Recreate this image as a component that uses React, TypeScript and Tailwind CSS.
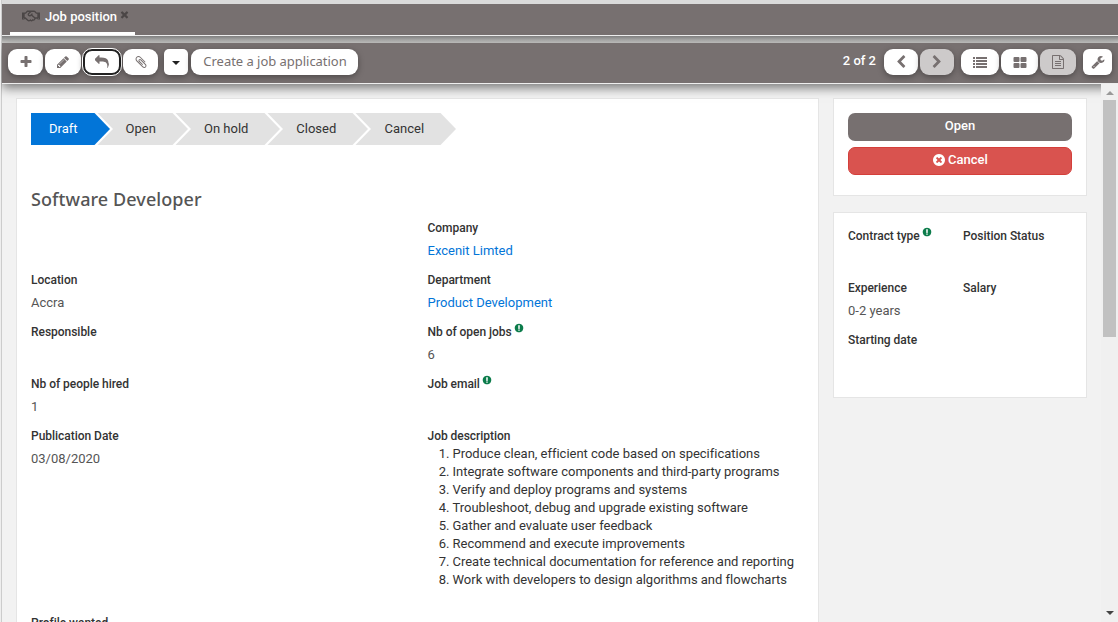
import type { ReactNode } from "react";
import { FaRegHandshake } from "react-icons/fa";

const PATHS = {
  plus: "M1600 736v192q0 40-28 68t-68 28h-416v416q0 40-28 68t-68 28h-192q-40 0-68-28t-28-68v-416h-416q-40 0-68-28t-28-68v-192q0-40 28-68t68-28h416v-416q0-40 28-68t68-28h192q40 0 68 28t28 68v416h416q40 0 68 28t28 68z",
  pencil: "M491 1536l91-91-235-235-91 91v107h128v128h107zm523-928q0-22-22-22-10 0-17 7l-542 542q-7 7-7 17 0 22 22 22 10 0 17-7l542-542q7-7 7-17zm-54-192l416 416-832 832h-416v-416zm683 96q0 53-37 90l-166 166-416-416 166-165q36-38 90-38 53 0 91 38l235 234q37 39 37 91z",
  reply: "M1792 1120q0 166-127 451-3 7-10.5 24t-13.5 30-13 22q-12 17-28 17-15 0-23.5-10t-8.5-25q0-9 2.5-26.5t2.5-23.5q5-68 5-123 0-112-19.5-200.5t-54-153.5-89-112-115-80.5-144.5-47-164.5-24.5-190.5-7h-224v256q0 26-19 45t-45 19-45-19l-512-512q-19-19-19-45t19-45l512-512q19-19 45-19t45 19 19 45v256h224q713 0 875 403 53 134 53 333z",
  clip: "M1596 1385q0 117-79 196t-196 79q-135 0-235-100l-777-776q-113-115-113-271 0-159 110-270t269-111q158 0 273 113l605 606q10 10 10 22 0 16-30.5 46.5t-46.5 30.5q-13 0-23-10l-606-607q-79-77-181-77-106 0-179 75t-73 181q0 105 76 181l776 777q63 63 145 63 64 0 106-42t42-106q0-82-63-145l-581-581q-26-24-60-24-29 0-48 19t-19 48q0 32 25 59l410 410q10 10 10 22 0 16-31 47t-47 31q-12 0-22-10l-410-410q-63-61-63-149 0-82 57-139t139-57q88 0 149 63l581 581q100 98 100 235z",
  left: "M1427 301l-531 531 531 531q19 19 19 45t-19 45l-166 166q-19 19-45 19t-45-19l-742-742q-19-19-19-45t19-45l742-742q19-19 45-19t45 19l166 166q19 19 19 45t-19 45z",
  right: "M1363 877l-742 742q-19 19-45 19t-45-19l-166-166q-19-19-19-45t19-45l531-531-531-531q-19-19-19-45t19-45l166-166q19-19 45-19t45 19l742 742q19 19 19 45t-19 45z",
  list: "M0 256h256v256H0zM384 256h1408v256H384zM0 640h256v256H0zM384 640h1408v256H384zM0 1024h256v256H0zM384 1024h1408v256H384zM0 1408h256v256H0zM384 1408h1408v256H384z",
  grid: "M192 256h512q128 0 128 128v384q0 128-128 128h-512q-128 0-128-128v-384q0-128 128-128zM1088 256h512q128 0 128 128v384q0 128-128 128h-512q-128 0-128-128v-384q0-128 128-128zM192 1024h512q128 0 128 128v384q0 128-128 128h-512q-128 0-128-128v-384q0-128 128-128zM1088 1024h512q128 0 128 128v384q0 128-128 128h-512q-128 0-128-128v-384q0-128 128-128z",
  file: "M1596 380q28 28 48 76t20 88v1152q0 40-28 68t-68 28h-1344q-40 0-68-28t-28-68v-1600q0-40 28-68t68-28h896q40 0 88 20t76 48zm-444-244v376h376q-10-29-22-41l-313-313q-12-12-41-22zm384 1528v-1024h-416q-40 0-68-28t-28-68v-416h-768v1536h1280zm-1024-864q0-14 9-23t23-9h704q14 0 23 9t9 23v64q0 14-9 23t-23 9h-704q-14 0-23-9t-9-23v-64zm736 224q14 0 23 9t9 23v64q0 14-9 23t-23 9h-704q-14 0-23-9t-9-23v-64q0-14 9-23t23-9h704zm0 256q14 0 23 9t9 23v64q0 14-9 23t-23 9h-704q-14 0-23-9t-9-23v-64q0-14 9-23t23-9h704z",
  wrench: "M448 1472q0-26-19-45t-45-19-45 19-19 45 19 45 45 19 45-19 19-45zm644-420l-682 682q-37 37-90 37-52 0-91-37l-106-108q-38-36-38-90 0-53 38-91l681-681q39 98 114.5 173.5t173.5 114.5zm634-435q0 39-23 106-47 134-164.5 217.5t-258.5 83.5q-185 0-316.5-131.5t-131.5-316.5 131.5-316.5 316.5-131.5q58 0 121.5 16.5t107.5 46.5q16 11 16 28t-16 28l-293 169v224l193 107q5-3 79-48.5t135.5-81 70.5-35.5q15 0 23.5 10t8.5 25z",
  times: "M1490 1322q0 40-28 68l-136 136q-28 28-68 28t-68-28l-294-294-294 294q-28 28-68 28t-68-28l-136-136q-28-28-28-68t28-68l294-294-294-294q-28-28-28-68t28-68l136-136q28-28 68-28t68 28l294 294 294-294q28-28 68-28t68 28l136 136q28 28 28 68t-28 68l-294 294 294 294q28 28 28 68z",
  timesCircle: "M1277 1122q0-26-19-45l-181-181 181-181q19-19 19-45 0-27-19-46l-90-90q-19-19-46-19-26 0-45 19l-181 181-181-181q-19-19-45-19-27 0-46 19l-90 90q-19 19-19 46 0 26 19 45l181 181-181 181q-19 19-19 45 0 27 19 46l90 90q19 19 46 19 26 0 45-19l181-181 181 181q19 19 45 19 27 0 46-19l90-90q19-19 19-46zm387-226q0 209-103 385.5t-279.5 279.5-385.5 103-385.5-103-279.5-279.5-103-385.5 103-385.5 279.5-279.5 385.5-103 385.5 103 279.5 279.5 103 385.5z",
  info: "M896 128q209 0 385.5 103t279.5 279.5 103 385.5-103 385.5-279.5 279.5-385.5 103-385.5-103-279.5-279.5-103-385.5 103-385.5 279.5-279.5 385.5-103zm128 1247v-190q0-14-9-23.5t-22-9.5h-192q-13 0-23 10t-10 23v188q0 13 10 23t23 10h192q13 0 22-9.5t9-23.5zm-2-344l18-621q0-12-10-18-10-8-24-8h-220q-14 0-24 8-10 6-10 18l17 621q0 10 10 17.5t24 7.5h185q14 0 23.5-7.5t10.5-17.5z",
};

function Icon({ name, className = "size-[14px]" }: { name: keyof typeof PATHS; className?: string }) {
  return (
    <svg viewBox="0 0 1792 1792" fill="currentColor" className={`shrink-0 ${className}`}>
      <path d={PATHS[name]} />
    </svg>
  );
}

function ToolButton({ className, children }: { className: string; children: ReactNode }) {
  return (
    <button className={`flex h-[26px] shrink-0 items-center justify-center text-[#777070] shadow-[0_2px_6px_rgba(0,0,0,0.35)] ${className}`}>
      {children}
    </button>
  );
}

type FieldProps = { label?: string; info?: boolean; value?: string; link?: boolean; className?: string };

function Field({ label, info, value, link, className = "" }: FieldProps) {
  return (
    <div className={`h-[52px] ${className}`}>
      <div className="flex h-[18px] items-center text-[12px] font-medium tracking-[-0.03px] whitespace-nowrap text-[#333]">
        {label}
        {info && <Icon name="info" className="mb-[8px] ml-[2px] size-[10px] text-[#0c7c4b]" />}
      </div>
      <div className={`mt-[5px] h-[18px] text-[13px] leading-[18px] whitespace-nowrap ${link ? "text-[#0275d8]" : "text-[#555]"}`}>
        {value}
      </div>
    </div>
  );
}

const STEPS = [
  { label: "Draft", points: "0,0 63.5,0 79,16 63.5,32 0,32", x: 18 },
  { label: "Open", points: "66.5,0 141.5,0 157,16 141.5,32 66.5,32 82,16", x: 94.5 },
  { label: "On hold", points: "144.5,0 233.5,0 249,16 233.5,32 144.5,32 160,16", x: 173 },
  { label: "Closed", points: "236.5,0 321.5,0 337,16 321.5,32 236.5,32 252,16", x: 265.3 },
  { label: "Cancel", points: "324.5,0 409.5,0 425,16 409.5,32 324.5,32 340,16", x: 353.5 },
];

const DUTIES = [
  "Produce clean, efficient code based on specifications",
  "Integrate software components and third-party programs",
  "Verify and deploy programs and systems",
  "Troubleshoot, debug and upgrade existing software",
  "Gather and evaluate user feedback",
  "Recommend and execute improvements",
  "Create technical documentation for reference and reporting",
  "Work with developers to design algorithms and flowcharts",
];

export default function App() {
  return (
    <div className="flex h-[622px] w-[1118px] flex-col overflow-hidden border-l border-[#eee] bg-[#f2f2f2] font-['Roboto',sans-serif]">
      <div className="flex h-full flex-col border-l border-[#ccc]">
        <div className="h-1 shrink-0 bg-[#dadada]" />
        <header className="flex h-8 shrink-0 border-b border-[#eee] bg-[#777070] pl-2">
          <div className="flex h-[31px] w-[125px] border-b-[3px] border-white pl-3">
            <FaRegHandshake className="mt-[3px] h-[18px] w-[18px] text-[#4b4646]" />
            <span className="ml-[5px] h-[25px] text-[13px] leading-[25px] font-medium whitespace-nowrap text-white">Job position</span>
            <Icon name="times" className="mt-[5px] ml-[2px] size-[11px] text-[#4b4646]" />
          </div>
        </header>
        <div className="h-[7px] shrink-0 bg-linear-to-b from-[#808080] to-[#d0d0ce]" />
        <div className="relative z-10 flex h-[41px] shrink-0 items-start border-b border-[#eee] bg-[#777070] pt-[6px] pl-[6px] shadow-[0_4px_10px_rgba(0,0,0,0.5)]">
          <ToolButton className="w-[35px] rounded-[9px] bg-white"><Icon name="plus" /></ToolButton>
          <ToolButton className="ml-[2px] w-9 rounded-[9px] bg-white"><Icon name="pencil" /></ToolButton>
          <ToolButton className="ml-[2px] w-[38px] rounded-[9px] border-2 border-[#222] bg-white outline outline-white"><Icon name="reply" /></ToolButton>
          <ToolButton className="ml-[2px] w-[35px] rounded-[9px] bg-white"><Icon name="clip" /></ToolButton>
          <ToolButton className="ml-[6px] w-6 rounded-[5px] bg-white">
            <span className="mt-px border-x-4 border-t-4 border-x-transparent border-t-[#222]" />
          </ToolButton>
          <ToolButton className="ml-[3px] w-[167px] rounded-[9px] bg-white">
            <span className="mb-[2px] ml-px font-['Noto_Sans',sans-serif] text-[13px] leading-[18px] tracking-[-0.03px] whitespace-nowrap">Create a job application</span>
          </ToolButton>
          <span className="ml-auto h-6 text-[13px] leading-6 font-medium whitespace-nowrap text-white">2 of 2</span>
          <ToolButton className="ml-[8px] w-[34px] rounded-[9px] bg-white"><Icon name="left" /></ToolButton>
          <ToolButton className="ml-[2px] w-[34px] rounded-[9px] bg-[#cdcaca]"><Icon name="right" /></ToolButton>
          <ToolButton className="ml-[7px] w-[38px] rounded-[9px] bg-white"><Icon name="list" /></ToolButton>
          <ToolButton className="ml-[2px] w-[37px] rounded-[9px] bg-white"><Icon name="grid" /></ToolButton>
          <ToolButton className="ml-[2px] w-9 rounded-[9px] bg-[#cdcaca]"><Icon name="file" /></ToolButton>
          <ToolButton className="mr-[6px] ml-[7px] w-[29px] rounded-[6px] bg-white"><Icon name="wrench" /></ToolButton>
        </div>
        <div className="flex min-h-0 flex-1">
          <main className="flex min-w-0 flex-1 items-start pt-[14px] pl-[14px]">
            <section className="h-[620px] w-[803px] shrink-0 border border-[#e5e5e5] bg-white px-[14px] pt-[14px]">
              <svg width="426" height="32" className="block text-[13px] font-[Roboto]">
                {STEPS.map((s, i) => (
                  <g key={s.label}>
                    <polygon points={s.points} fill={i === 0 ? "#0275d8" : "#e2e2e2"} />
                    <text x={s.x} y="20" fill={i === 0 ? "#fff" : "#333"}>{s.label}</text>
                  </g>
                ))}
              </svg>
              <h1 className="mt-[41px] h-[27px] font-['Noto_Sans',sans-serif] text-[18px] leading-[27px] font-medium tracking-[0.08px] text-[#555]">Software Developer</h1>
              <div className="mt-[6px] flex">
                <div className="w-[396.5px]">
                  <Field />
                  <Field label="Location" value="Accra" />
                  <Field label="Responsible" />
                  <Field label="Nb of people hired" value="1" />
                  <Field label="Publication Date" value="03/08/2020" />
                  <Field className="mt-[135px]" label="Profile wanted" />
                </div>
                <div>
                  <Field label="Company" value="Excenit Limted" link />
                  <Field label="Department" value="Product Development" link />
                  <Field label="Nb of open jobs" info value="6" />
                  <Field label="Job email" info />
                  <div className="h-[18px] text-[12px] leading-[18px] font-medium tracking-[-0.03px] text-[#333]">Job description</div>
                  <ol className="text-[13px] leading-[18px] tracking-[-0.01px] text-[#333]">
                    {DUTIES.map((d, i) => (
                      <li key={d} className="flex whitespace-nowrap">
                        <span className="mr-[3px] w-[22px] text-right">{i + 1}.</span>
                        {d}
                      </li>
                    ))}
                  </ol>
                </div>
              </div>
            </section>
            <aside className="ml-[14px] w-[254px] shrink-0">
              <div className="h-[98px] border border-[#e5e5e5] bg-white p-[14px]">
                <button className="block h-7 w-full rounded-[7px] bg-[#777070] pb-[2px] text-[13px] font-medium text-white">Open</button>
                <button className="mt-[6px] flex h-7 w-full items-center justify-center rounded-[7px] border border-[#d43f3a] bg-[#d9534f] pb-[2px] text-[13px] font-medium text-white">
                  <Icon name="timesCircle" className="mr-[2px] size-[14px]" />
                  Cancel
                </button>
              </div>
              <div className="mt-4 grid h-[186px] grid-cols-[115px_1fr] content-start border border-[#e5e5e5] bg-white px-[14px] pt-[14px]">
                <Field label="Contract type" info />
                <Field label="Position Status" />
                <Field label="Experience" value="0-2 years" />
                <Field label="Salary" />
                <Field label="Starting date" />
              </div>
            </aside>
          </main>
          <div className="relative z-20 flex w-[17px] shrink-0 flex-col items-center bg-[#f0f0f0]">
            <span className="mt-[7px] border-x-4 border-b-4 border-x-transparent border-b-[#999]" />
            <div className="mt-[5px] h-[237px] w-[13px] bg-[#c1c1c1]" />
            <span className="mt-auto mb-[7px] border-x-4 border-t-4 border-x-transparent border-t-[#444]" />
          </div>
        </div>
      </div>
    </div>
  );
}
